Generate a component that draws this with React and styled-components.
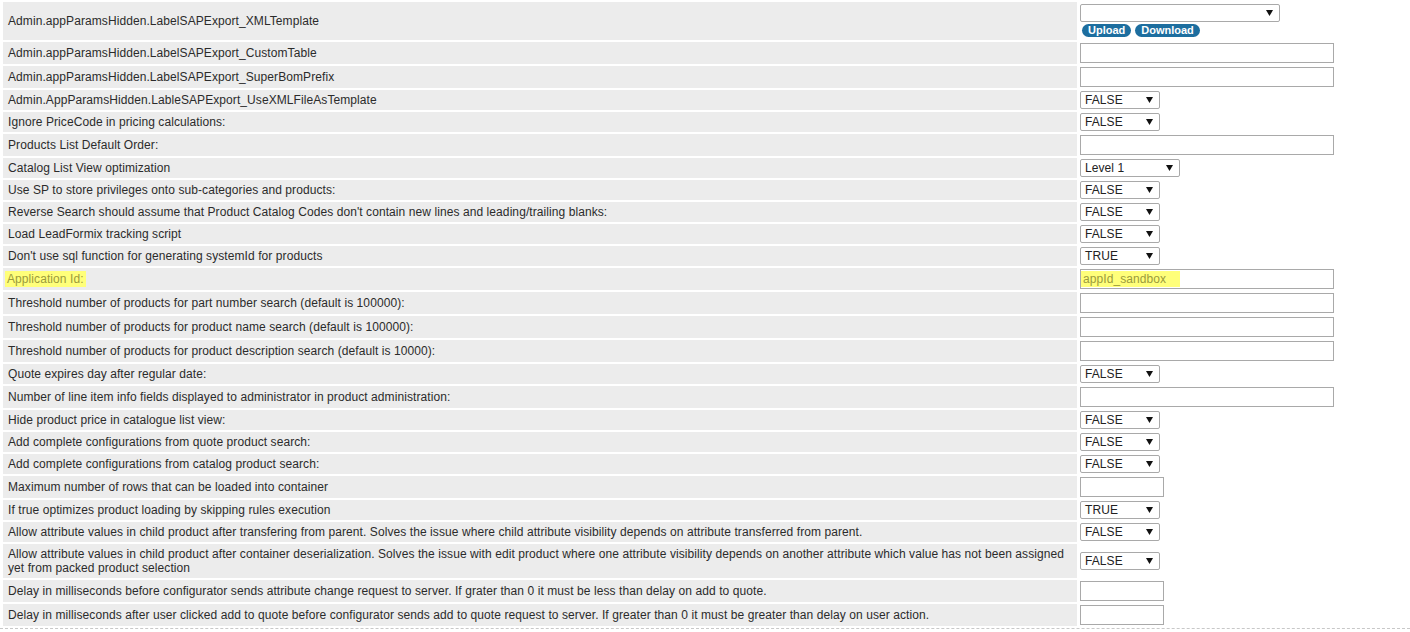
import React from "react";
import styled, { createGlobalStyle } from "styled-components";

const Global = createGlobalStyle`
  html, body { margin: 0; padding: 0; background: #fff; }
  body { font-family: "Liberation Sans", Arial, sans-serif; font-size: 12px; color: #2b2b2b; }
`;

const Table = styled.div`
  display: grid;
  grid-template-columns: 1074px 1fr;
  row-gap: 2px;
  padding: 2px 0 2px 3px;
  border-bottom: 1px dashed #c8c8c8;
`;

const Label = styled.div`
  background: #ececec;
  display: flex;
  align-items: center;
  padding: 3px 5px;
  line-height: 14px;
  letter-spacing: 0.08px;
  box-sizing: border-box;
`;

const Value = styled.div`
  display: flex;
  flex-direction: ${(p) => (p.$stack ? "column" : "row")};
  align-items: ${(p) => (p.$stack ? "flex-start" : "center")};
  gap: 2px;
  padding: ${(p) => (p.$stack ? "2px 3px 3px" : "1px 3px")};
`;

const Mark = styled.span`
  background: #ffff7a;
  color: #9b9b3c;
  padding: 1px 2px;
  margin-left: -3px;
`;

const TextInput = styled.div`
  width: ${(p) => p.$w}px;
  height: 20px;
  box-sizing: border-box;
  border: 1px solid #a9a9a9;
  background: #fff;
  display: flex;
  align-items: stretch;
  padding: 1px 0;
  font-size: 12px;
  letter-spacing: 0.08px;
`;

const InputMark = styled.span`
  background: #ffff7a;
  color: #9b9b3c;
  display: flex;
  align-items: center;
  padding: 0 14px 0 2px;
`;

const Select = styled.div`
  width: ${(p) => p.$w}px;
  height: 18px;
  box-sizing: border-box;
  border: 1px solid #a9a9a9;
  border-radius: 2px;
  background: #fff;
  display: flex;
  align-items: center;
  justify-content: space-between;
  padding: 0 6px 0 4px;
  color: #222;
  font-size: 12px;
  letter-spacing: 0.08px;
`;

const Arrow = styled.svg`
  width: 7px;
  height: 6px;
  flex: none;
`;

const ButtonRow = styled.div`
  display: flex;
  gap: 4px;
  padding-left: 2px;
`;

const PillButton = styled.span`
  height: 13px;
  padding: 0 6px;
  border-radius: 7px;
  background: #1d6e9f;
  color: #fff;
  font-weight: bold;
  font-size: 11px;
  line-height: 13px;
  display: inline-flex;
  align-items: center;
`;

const Tri = () => (
  <Arrow viewBox="0 0 7 6">
    <path d="M0 0H7L3.5 6Z" fill="#111" />
  </Arrow>
);

const Sel = ({ w = 80, v = "" }) => (
  <Select $w={w}>
    <span>{v}</span>
    <Tri />
  </Select>
);

const rows = [
  { l: "Admin.appParamsHidden.LabelSAPExport_CustomTable", t: "in", w: 254 },
  { l: "Admin.appParamsHidden.LabelSAPExport_SuperBomPrefix", t: "in", w: 254 },
  { l: "Admin.AppParamsHidden.LableSAPExport_UseXMLFileAsTemplate", t: "sel", v: "FALSE" },
  { l: "Ignore PriceCode in pricing calculations:", t: "sel", v: "FALSE" },
  { l: "Products List Default Order:", t: "in", w: 254 },
  { l: "Catalog List View optimization", t: "sel", v: "Level 1", w: 100 },
  { l: "Use SP to store privileges onto sub-categories and products:", t: "sel", v: "FALSE" },
  { l: "Reverse Search should assume that Product Catalog Codes don't contain new lines and leading/trailing blanks:", t: "sel", v: "FALSE" },
  { l: "Load LeadFormix tracking script", t: "sel", v: "FALSE" },
  { l: "Don't use sql function for generating systemId for products", t: "sel", v: "TRUE" },
  { l: "Application Id:", t: "app" },
  { l: "Threshold number of products for part number search (default is 100000):", t: "in", w: 254 },
  { l: "Threshold number of products for product name search (default is 100000):", t: "in", w: 254 },
  { l: "Threshold number of products for product description search (default is 10000):", t: "in", w: 254 },
  { l: "Quote expires day after regular date:", t: "sel", v: "FALSE" },
  { l: "Number of line item info fields displayed to administrator in product administration:", t: "in", w: 254 },
  { l: "Hide product price in catalogue list view:", t: "sel", v: "FALSE" },
  { l: "Add complete configurations from quote product search:", t: "sel", v: "FALSE" },
  { l: "Add complete configurations from catalog product search:", t: "sel", v: "FALSE" },
  { l: "Maximum number of rows that can be loaded into container", t: "in", w: 84 },
  { l: "If true optimizes product loading by skipping rules execution", t: "sel", v: "TRUE" },
  { l: "Allow attribute values in child product after transfering from parent. Solves the issue where child attribute visibility depends on attribute transferred from parent.", t: "sel", v: "FALSE" },
  { l: "Allow attribute values in child product after container deserialization. Solves the issue with edit product where one attribute visibility depends on another attribute which value has not been assigned yet from packed product selection", t: "sel", v: "FALSE" },
  { l: "Delay in milliseconds before configurator sends attribute change request to server. If grater than 0 it must be less than delay on add to quote.", t: "in", w: 84 },
  { l: "Delay in milliseconds after user clicked add to quote before configurator sends add to quote request to server. If greater than 0 it must be greater than delay on user action.", t: "in", w: 84 },
];

export default function App() {
  return (
    <>
      <Global />
      <Table>
        <Label>Admin.appParamsHidden.LabelSAPExport_XMLTemplate</Label>
        <Value $stack>
          <Sel w={200} />
          <ButtonRow>
            <PillButton>Upload</PillButton>
            <PillButton>Download</PillButton>
          </ButtonRow>
        </Value>
        {rows.map((r, i) => (
          <React.Fragment key={i}>
            <Label>{r.t === "app" ? <Mark>{r.l}</Mark> : r.l}</Label>
            <Value>
              {r.t === "in" && <TextInput $w={r.w} />}
              {r.t === "sel" && <Sel w={r.w || 80} v={r.v} />}
              {r.t === "app" && (
                <TextInput $w={254}>
                  <InputMark>appId_sandbox</InputMark>
                </TextInput>
              )}
            </Value>
          </React.Fragment>
        ))}
      </Table>
    </>
  );
}
